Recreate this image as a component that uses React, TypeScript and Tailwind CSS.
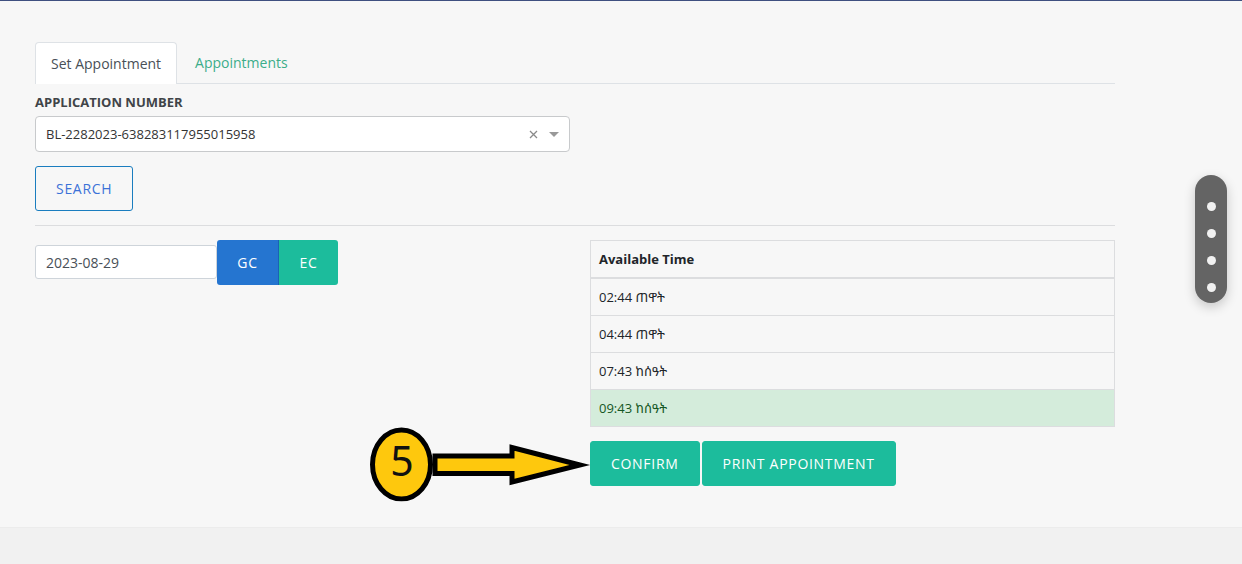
import { useState } from "react";

type Slot = { id: string; label: string };

const slots: Slot[] = [
  { id: "a", label: "02:44 ጠዋት" },
  { id: "b", label: "04:44 ጠዋት" },
  { id: "c", label: "07:43 ከሰዓት" },
  { id: "d", label: "09:43 ከሰዓት" },
];

function StepArrow() {
  return (
    <svg
      className="pointer-events-none absolute right-full top-1/2 -mr-1 -translate-y-1/2"
      width="224"
      height="75"
      viewBox="0 0 224 75"
      aria-hidden="true"
    >
      <path
        d="M65 29.500H142V21L210 38.500L142 55.500V47H65Z"
        fill="#fec80d"
        stroke="#000"
        strokeWidth="5"
        strokeMiterlimit="10"
      />
      <ellipse cx="31.500" cy="38" rx="29" ry="34.500" fill="#fec80d" stroke="#000" strokeWidth="5" />
      <text
        x="32"
        y="49"
        textAnchor="middle"
        fontSize="41"
        className="fill-[#111] font-['Noto_Sans','Open_Sans',sans-serif]"
      >
        5
      </text>
    </svg>
  );
}

export default function App() {
  const [calendar, setCalendar] = useState("GC");
  const [selected, setSelected] = useState("d");

  return (
    <div className="flex min-h-screen flex-col border-t border-[#3f5080] bg-[#f7f7f7] font-['Open_Sans','Noto_Sans','Noto_Sans_Ethiopic',sans-serif] text-sm text-[#212529]">
      <main className="pb-[41px] pl-[35px] pr-[127px] pt-[41px]">
        <nav className="flex border-b border-[#dee2e6]">
          <a
            href="#set"
            aria-current="page"
            className="-mb-px rounded-t border border-b-0 border-[#dee2e6] bg-white px-[15px] py-[10px] leading-[21px] text-[#495057]"
          >
            Set Appointment
          </a>
          <a href="#appointments" className="px-[18px] py-[10px] leading-[21px] text-[#3bad8a]">
            Appointments
          </a>
        </nav>

        <div className="grid grid-cols-[535fr_525fr] gap-x-5 pt-2">
          <div>
            <label
              htmlFor="application"
              className="block text-[13px] font-bold uppercase leading-5 text-[#404448]"
            >
              Application Number
            </label>
            <div className="relative mt-1">
              <select
                id="application"
                className="h-9 w-full appearance-none rounded border border-[#c8cacc] bg-white px-[10px] text-[13px] text-[#333]"
              >
                <option>BL-2282023-638283117955015958</option>
              </select>
              <button
                type="button"
                aria-label="Clear"
                className="absolute inset-y-0 right-8 flex items-center text-[#8a8a8a]"
              >
                <svg width="9" height="9" viewBox="0 0 9 9" stroke="currentColor" strokeWidth="1.300">
                  <path d="M1 1L8 8M8 1L1 8" />
                </svg>
              </button>
              <svg
                className="pointer-events-none absolute right-[11px] top-4"
                width="10"
                height="5"
                viewBox="0 0 10 5"
                fill="#999"
              >
                <path d="M0 0H10L5 5Z" />
              </svg>
            </div>
          </div>
        </div>

        <button
          type="button"
          className="mt-[14px] h-[45px] rounded-[3px] border border-[#1a7dbf] px-5 uppercase tracking-wider text-[#3b72d8]"
        >
          Search
        </button>

        <hr className="my-[14px] border-[#dcdddf]" />

        <div className="grid grid-cols-[535fr_525fr] gap-x-5">
          <div className="flex items-start">
            <input
              aria-label="Appointment date"
              defaultValue="2023-08-29"
              className="mt-[5px] h-[34px] w-[182px] rounded-[3px] border border-[#ced4da] bg-white px-[10px] text-[#495057]"
            />
            <button
              type="button"
              aria-pressed={calendar === "GC"}
              onClick={() => setCalendar("GC")}
              className="h-[45px] w-[62px] rounded-l-[3px] border-r border-[#1b62b5] bg-[#2575d0] tracking-wider text-white"
            >
              GC
            </button>
            <button
              type="button"
              aria-pressed={calendar === "EC"}
              onClick={() => setCalendar("EC")}
              className="h-[45px] w-[59px] rounded-r-[3px] bg-[#1cbc9c] tracking-wider text-white"
            >
              EC
            </button>
          </div>

          <div>
            <table className="w-full border-collapse border border-[#dcdddf] text-left leading-5">
              <thead>
                <tr>
                  <th className="border-b-2 border-[#dcdddf] px-2 py-2 text-[13px] font-bold">
                    Available Time
                  </th>
                </tr>
              </thead>
              <tbody>
                {slots.map((slot) => (
                  <tr
                    key={slot.id}
                    onClick={() => setSelected(slot.id)}
                    className={selected === slot.id ? "bg-[#d4ecdb] text-[#155724]" : "text-[#212529]"}
                  >
                    <td className="border-t border-[#dcdddf] px-2 py-2 text-[13px]">{slot.label}</td>
                  </tr>
                ))}
              </tbody>
            </table>

            <div className="relative mt-[14px] flex gap-[2px]">
              <StepArrow />
              <button
                type="button"
                className="h-[45px] rounded-[3px] border border-[#1cbc9c] bg-[#1cbc9c] px-5 uppercase tracking-wider text-white"
              >
                Confirm
              </button>
              <button
                type="button"
                className="h-[45px] rounded-[3px] border border-[#1cbc9c] bg-[#1cbc9c] px-5 uppercase tracking-wider text-white"
              >
                Print Appointment
              </button>
            </div>
          </div>
        </div>
      </main>

      <footer className="flex-1 border-t border-[#ececec] bg-[#f1f1f1]" />

      <aside
        aria-label="Quick settings"
        className="fixed right-[15px] top-[175px] flex w-8 flex-col items-center gap-[18px] rounded-full bg-[#646464] pb-[11px] pt-[27px] shadow-[0_4px_12px_rgba(0,0,0,0.2)]"
      >
        <span className="size-[9px] rounded-full bg-[#f1f1f1]" />
        <span className="size-[9px] rounded-full bg-[#f1f1f1]" />
        <span className="size-[9px] rounded-full bg-[#f1f1f1]" />
        <span className="size-[9px] rounded-full bg-[#f1f1f1]" />
      </aside>
    </div>
  );
}
